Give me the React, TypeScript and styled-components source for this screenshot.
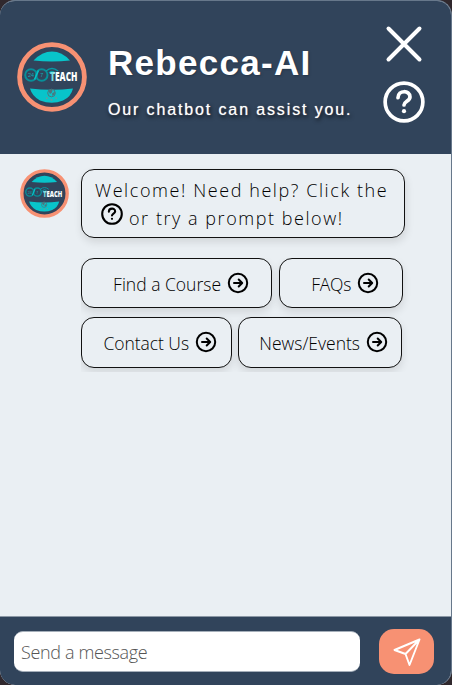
import React, { useId } from "react";
import styled, { createGlobalStyle } from "styled-components";

const navy = "#31445b";
const coral = "#f79173";
const teal = "#08c4ca";

const GlobalStyle = createGlobalStyle`
  * { box-sizing: border-box; }
  body { margin: 0; background: #30282d; }
`;

const Widget = styled.main`
  display: flex;
  flex-direction: column;
  width: 452px;
  height: 685px;
  overflow: hidden;
  background: #eaeff3;
  border: 1px solid #67788b;
  border-width: 1px 1px 0 0;
  border-radius: 15px;
  font-family: "Open Sans", "Noto Sans", sans-serif;
  font-weight: 300;
  color: #000;
`;

const Header = styled.header`
  display: flex;
  align-items: flex-start;
  height: 153px;
  flex: none;
  padding: 41px 26px 0 17px;
  background: ${navy};
`;

const Titles = styled.div`
  margin-left: 21px;
  flex: 1;
  font-family: "Liberation Sans", Arial, sans-serif;
  color: #fff;
  white-space: nowrap;
`;

const Title = styled.h1`
  margin: 1px 0 0;
  font-size: 35px;
  line-height: 40px;
  letter-spacing: 1.3px;
  font-weight: 700;
  text-shadow: 1px 1px 2px #24364a;
`;

const Subtitle = styled.p`
  margin: 17px 0 0;
  font-size: 16px;
  line-height: 20px;
  letter-spacing: 1.87px;
  font-weight: 400;
  text-shadow: 1px 2px 4px #000, 0 0 1px #fff;
`;

const HeaderActions = styled.div`
  display: flex;
  flex-direction: column;
  align-items: center;
  gap: 18px;
  margin-top: -17px;
`;

const IconButton = styled.button`
  display: flex;
  padding: 0;
  border: 0;
  background: none;
  color: #fff;
`;

const Messages = styled.section`
  display: flex;
  align-items: flex-start;
  height: 462px;
  flex: none;
  padding: 15px 0 0 20px;
`;

const Thread = styled.div`
  margin-left: 12px;
`;

const Bubble = styled.div`
  width: 324px;
  height: 69px;
  padding: 6px 13px;
  border: 1px solid #111;
  border-radius: 13px;
  box-shadow: 1px 4px 8px rgba(0, 0, 0, 0.11);
  font-size: 18px;
  line-height: 28px;
  white-space: nowrap;
`;

const Line = styled.div<{ $spacing: number }>`
  display: flex;
  align-items: center;
  height: 28px;
  letter-spacing: ${(p) => p.$spacing}px;
  svg { margin: -8px 6px 0 6px; }
`;

const Prompts = styled.div`
  display: grid;
  gap: 9px;
  margin-top: 20px;
  padding-bottom: 4px;
  overflow: hidden;
  width: 340px;
`;

const PromptRow = styled.div<{ $gap: number }>`
  display: flex;
  gap: ${(p) => p.$gap}px;
`;

const Prompt = styled.button<{ $width: number; $height: number; $end: number; $spacing: number }>`
  display: flex;
  align-items: center;
  justify-content: flex-end;
  gap: 6px;
  width: ${(p) => p.$width}px;
  height: ${(p) => p.$height}px;
  padding: 0 ${(p) => p.$end}px 1px 0;
  border: 1px solid #111;
  border-radius: 13px;
  background: #eaeff3;
  box-shadow: 0 4px 8px rgba(0, 0, 0, 0.11);
  font: inherit;
  font-size: 17.5px;
  letter-spacing: ${(p) => p.$spacing}px;
  color: #000;
  white-space: nowrap;
  span { padding-top: 2px; }
`;

const Footer = styled.footer`
  display: flex;
  align-items: center;
  gap: 19px;
  flex: 1;
  padding: 1px 17px 0 14px;
  background: ${navy};
  border-top: 1px solid #8c98a5;
`;

const MessageInput = styled.input`
  width: 347px;
  height: 41px;
  padding: 1px 7px 0;
  border: 1px solid #a5afba;
  border-width: 1px 0;
  border-radius: 9px;
  background: #fff;
  font: inherit;
  font-size: 18px;
  letter-spacing: -0.36px;
  &::placeholder { color: #555; }
`;

const Send = styled.button`
  display: flex;
  align-items: center;
  justify-content: center;
  width: 55px;
  height: 45px;
  padding: 0;
  border: 0;
  border-radius: 15px;
  background: ${coral};
`;

function Logo({ size }: { size: number }) {
  const tint = useId();
  return (
    <svg width={size} height={size} viewBox="0 0 70 70" aria-label="24/7 Teach">
      <defs>
        <linearGradient id={tint}>
          <stop offset="0.1" stopColor="#75e0e2" />
          <stop offset="0.25" stopColor="#fff" />
        </linearGradient>
      </defs>
      <circle cx="35" cy="35" r="32.4" fill={navy} stroke={coral} strokeWidth="4.8" />
      <path d="M16.5 18.5Q25 9.5 35 9.5T53 18.5Q35 20.5 16.5 18.5Z" fill={teal} />
      <path d="M13 46.5Q35 49 56 46.5Q54 55 46 58.5Q35 63 23 58.5Q15 54 13 46.5Z" fill={teal} />
      <g fill="none" stroke="#078f99" strokeWidth="2">
        <circle cx="14" cy="33" r="5.8" />
        <circle cx="24.7" cy="33" r="5.8" />
        <path d="M17.5 37.5L21.5 28.5" stroke={teal} strokeWidth="1.5" />
      </g>
      <g fill="#0caeb7" fontFamily="Liberation Sans, sans-serif" fontSize="5.5">
        <text x="11" y="35">24</text>
        <text x="23.2" y="35">7</text>
      </g>
      <path d="M29 29Q35 24 41 29M32 31Q35 28 38 31" fill="none" stroke="#079aa4" strokeWidth="1.4" />
      <text x="33" y="39.3" fill={`url(#${tint})`} fontFamily="Open Sans, sans-serif" fontWeight="800" fontSize="11.5" textLength="27.5" lengthAdjust="spacingAndGlyphs">TEACH</text>
      <circle cx="34.5" cy="51" r="3.8" fill="none" stroke="#4b777e" strokeWidth="1" />
      <path d="M31.5 49Q33 47 35.5 48L35 50.5L33 52ZM35 51.5L38 49.5L37.5 52.5L35.5 54Z" fill="#4b777e" />
      <g fill="#619f9e">
        <circle cx="29.8" cy="56.3" r="1" />
        <circle cx="34.5" cy="57.8" r="1.1" />
        <circle cx="39.2" cy="56.3" r="1" />
      </g>
    </svg>
  );
}

function HelpIcon({ size, stroke }: { size: number; stroke: number }) {
  return (
    <svg width={size} height={size} viewBox="0 0 42 42" fill="none" stroke="currentColor" strokeWidth={stroke} strokeLinecap="round">
      <circle cx="21" cy="21" r={20.7 - stroke / 2} />
      <path d="M15 16.7C15.2 8.8 27 8.9 27 16C27 20 21 20.5 21 24" />
      <circle cx="21" cy="30.2" r="2.1" fill="currentColor" stroke="none" />
    </svg>
  );
}

function ArrowIcon() {
  return (
    <svg width="22" height="22" viewBox="0 0 22 22" fill="none" stroke="#000" strokeWidth="2" strokeLinecap="round" strokeLinejoin="round">
      <circle cx="11" cy="11" r="9.2" />
      <path d="M7 11H15M11.7 7.5L15.2 11L11.7 14.5" />
    </svg>
  );
}

export default function App() {
  return (
    <>
      <GlobalStyle />
      <Widget>
        <Header>
          <Logo size={70} />
          <Titles>
            <Title>Rebecca-AI</Title>
            <Subtitle>Our chatbot can assist you.</Subtitle>
          </Titles>
          <HeaderActions>
            <IconButton aria-label="Close">
              <svg width="38" height="38" viewBox="0 0 38 38" fill="none" stroke="currentColor" strokeWidth="4" strokeLinecap="round">
                <path d="M3.5 3.5L34.5 34.5M34.5 3.5L3.5 34.5" />
              </svg>
            </IconButton>
            <IconButton aria-label="Help"><HelpIcon size={42} stroke={3.7} /></IconButton>
          </HeaderActions>
        </Header>
        <Messages>
          <Logo size={49} />
          <Thread>
            <Bubble>
              <Line $spacing={1.58}>Welcome! Need help? Click the</Line>
              <Line $spacing={1.55}><HelpIcon size={22} stroke={4} />or try a prompt below!</Line>
            </Bubble>
            <Prompts>
              <PromptRow $gap={7}>
                <Prompt $width={191} $height={50} $end={22} $spacing={0}><span>Find a Course</span><ArrowIcon /></Prompt>
                <Prompt $width={124} $height={50} $end={23} $spacing={-0.3}><span>FAQs</span><ArrowIcon /></Prompt>
              </PromptRow>
              <PromptRow $gap={6}>
                <Prompt $width={151} $height={51} $end={14} $spacing={-0.05}><span>Contact Us</span><ArrowIcon /></Prompt>
                <Prompt $width={164} $height={51} $end={13} $spacing={0}><span>News/Events</span><ArrowIcon /></Prompt>
              </PromptRow>
            </Prompts>
          </Thread>
        </Messages>
        <Footer>
          <MessageInput placeholder="Send a message" aria-label="Message" />
          <Send aria-label="Send">
            <svg width="28" height="28" viewBox="0 0 28 28" fill="none" stroke="#fff" strokeWidth="1.9" strokeLinejoin="round">
              <path d="M26.5 1.5L1.5 12L12.5 16L16.5 27ZM12.5 16L26.5 1.5" />
            </svg>
          </Send>
        </Footer>
      </Widget>
    </>
  );
}
